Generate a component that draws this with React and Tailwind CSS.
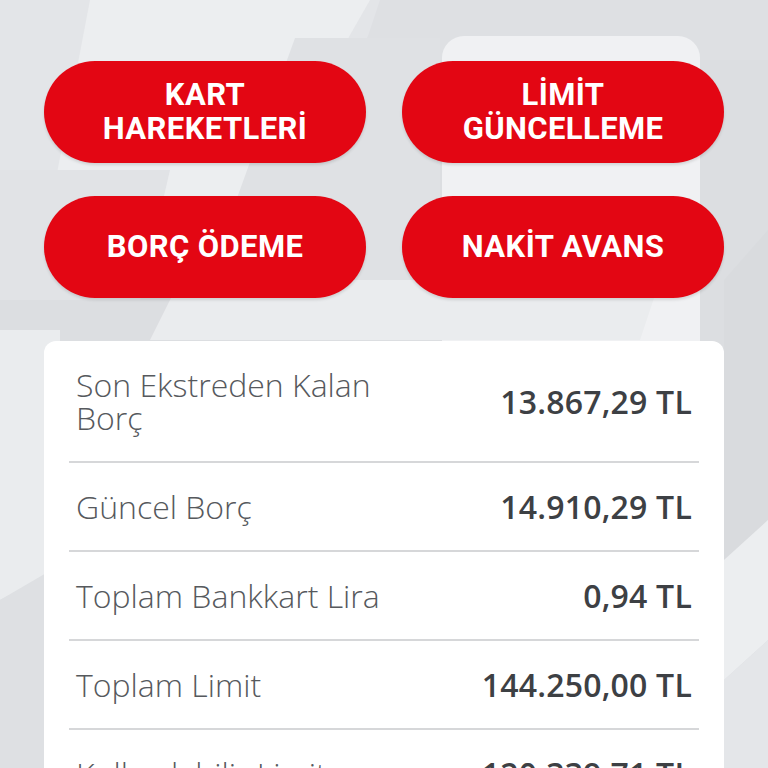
import React from "react";

function Bg() {
  return (
    <svg className="absolute inset-0 w-full h-full" viewBox="0 0 768 768" preserveAspectRatio="none">
      <rect x="0" y="0" width="768" height="768" fill="#dcdee1" />
      <polygon points="0,0 390,0 270,200 0,200" fill="#e3e5e8" />
      <polygon points="90,0 370,0 250,210 50,210" fill="#eceef0" />
      <polygon points="380,0 768,0 768,60 360,60" fill="#dee0e3" />
      <polygon points="295,38 440,38 440,300 200,300" fill="#dfe1e4" />
      <rect x="442" y="36" width="258" height="400" rx="22" fill="#f0f1f3" />
      <polygon points="0,170 170,170 140,300 0,300" fill="#e1e3e6" />
      <polygon points="180,280 660,280 640,340 150,340" fill="#eaecee" />
      <polygon points="0,330 60,330 60,570 0,600" fill="#eaecee" />
      <polygon points="0,600 60,565 60,768 0,768" fill="#dee0e3" />
      <polygon points="724,280 768,230 768,520 724,560" fill="#d9dbde" />
      <polygon points="724,560 768,520 768,640 724,680" fill="#eceef0" />
      <polygon points="724,680 768,640 768,768 724,768" fill="#e4e6e9" />
    </svg>
  );
}

const rows = [
  ["Son Ekstreden Kalan Borç", "13.867,29 TL"],
  ["Güncel Borç", "14.910,29 TL"],
  ["Toplam Bankkart Lira", "0,94 TL"],
  ["Toplam Limit", "144.250,00 TL"],
  ["Kullanılabilir Limit", "120.339,71 TL"],
];

function Btn({ children }) {
  return (
    <div className="h-[102px] rounded-full bg-[#e30613] flex items-center justify-center text-center text-white font-bold text-[31px] leading-[34px] tracking-[0.4px] shadow-[0_2px_3px_rgba(0,0,0,0.12)]">
      <span>{children}</span>
    </div>
  );
}

export default function App() {
  return (
    <div className="relative w-[768px] h-[768px] overflow-hidden" style={{ fontFamily: "'Open Sans', Lato, sans-serif" }}>
      <Bg />
      <div className="relative pt-[61px] px-[44px]">
        <div className="grid grid-cols-2 gap-x-[36px] gap-y-[33px]" style={{ fontFamily: "Roboto, sans-serif" }}>
          <Btn>KART<br />HAREKETLERİ</Btn>
          <Btn>LİMİT<br />GÜNCELLEME</Btn>
          <Btn>BORÇ ÖDEME</Btn>
          <Btn>NAKİT AVANS</Btn>
        </div>
        <div className="mt-[43px] bg-white rounded-t-[12px]">
          {rows.map(([l, v], i) => (
            <div key={i} className="mx-[25px] border-b-2 border-[#d6d7d9] py-[27px] px-[7px] flex items-center justify-between">
              <div className="w-[330px] text-[32px] leading-[33px] font-light text-[#56595d]">{l}</div>
              <div className="text-[32px] leading-[33px] font-semibold text-[#3d4044] tracking-[0.2px]">{v}</div>
            </div>
          ))}
        </div>
      </div>
    </div>
  );
}
